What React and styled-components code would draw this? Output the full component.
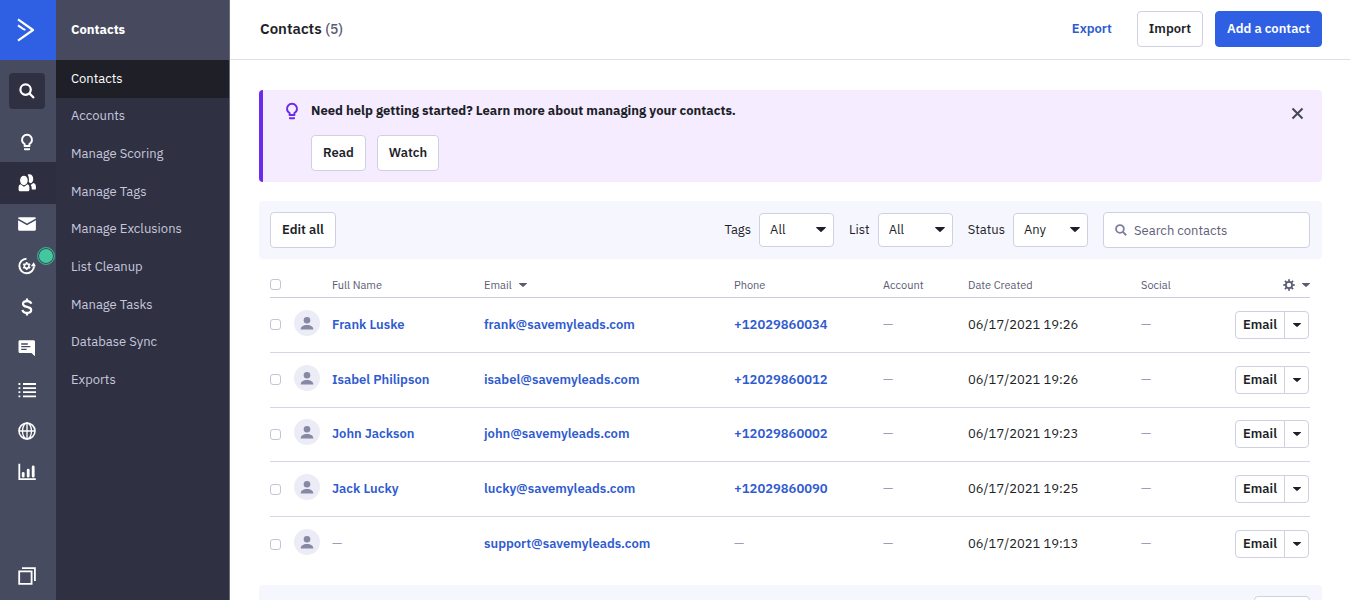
import React, { useState } from 'react';
import styled, { createGlobalStyle } from 'styled-components';

const GlobalStyle = createGlobalStyle`
  * {
    box-sizing: border-box;
  }
  body {
    margin: 0;
    background: #fff;
    color: #1e1f29;
    font-family: 'IBM Plex Sans', Roboto, sans-serif;
    font-size: 13px;
    line-height: 18px;
  }
  button, input, select {
    margin: 0;
    font: inherit;
    color: inherit;
  }
  a {
    text-decoration: none;
  }
`;

const Page = styled.div`
  display: flex;
  height: 100vh;
  overflow: hidden;
`;

const Rail = styled.nav`
  display: flex;
  flex-direction: column;
  flex: none;
  width: 56px;
  background: #464b5f;
`;

const Logo = styled.a`
  display: flex;
  align-items: center;
  justify-content: center;
  flex: none;
  height: 60px;
  padding-right: 4px;
  background: #2f5fe3;
`;

const RailSearch = styled.button`
  display: flex;
  align-items: center;
  justify-content: center;
  flex: none;
  width: 36px;
  height: 36px;
  margin: 13px 9px 12px;
  padding: 0;
  border: 0;
  border-radius: 4px;
  background: #2f3042;
`;

const RailList = styled.div`
  display: grid;
  grid-auto-rows: 1fr;
  height: 372px;
`;

const RailItem = styled.a`
  position: relative;
  display: flex;
  align-items: center;
  justify-content: center;
  padding-right: 2px;
  background: ${props => (props.$active ? '#2d2e40' : 'transparent')};
`;

const RailBottom = styled.div`
  margin-top: auto;
  padding: 0 2px 15px 0;
  display: flex;
  justify-content: center;
`;

const Dot = styled.span`
  position: absolute;
  right: 1px;
  top: 2px;
  width: 18px;
  height: 18px;
  border: 1px solid #3fa98c;
  border-radius: 50%;
  background: #44c69e;
  box-shadow: inset 0 0 0 1px #2c4a55;
`;

const SubMenu = styled.nav`
  flex: none;
  width: 174px;
  border-right: 1px solid #6b6c7c;
  background: #2f3042;
`;

const SubTitle = styled.h2`
  display: flex;
  align-items: center;
  height: 60px;
  margin: 0;
  padding-left: 15px;
  background: #474a5e;
  color: #fff;
  font-size: 13px;
  font-weight: 700;
`;

const SubList = styled.div`
  display: grid;
  grid-auto-rows: 1fr;
  height: 339px;
`;

const SubItem = styled.a`
  display: flex;
  align-items: center;
  padding-left: 15px;
  background: ${props => (props.$active ? '#1e1f27' : 'transparent')};
  color: ${props => (props.$active ? '#fff' : '#c6c8dc')};
`;

const Main = styled.main`
  flex: 1;
  min-width: 0;
`;

const Header = styled.header`
  display: flex;
  align-items: center;
  height: 60px;
  padding: 0 28px 2px 30px;
  border-bottom: 1px solid #dddeea;
`;

const Title = styled.h1`
  flex: 1;
  margin: 0;
  font-size: 15px;
  font-weight: 600;
  span {
    color: #5a5b74;
    font-size: 14px;
    font-weight: 500;
  }
`;

const ExportLink = styled.a`
  margin-right: 25px;
  color: #2f5bd0;
  font-weight: 600;
`;

const Button = styled.button`
  height: 36px;
  padding: 0 11px;
  border: 1px solid ${props => (props.$primary ? '#2f5fe3' : '#cfd0e2')};
  border-radius: 4px;
  background: ${props => (props.$primary ? '#2f5fe3' : '#fff')};
  color: ${props => (props.$primary ? '#fff' : '#1e1f29')};
  font-weight: 600;
  white-space: nowrap;
`;

const HeaderButtons = styled.div`
  display: flex;
  gap: 12px;
`;

const Content = styled.div`
  padding: 30px 28px 0 29px;
`;

const Banner = styled.section`
  display: flex;
  align-items: flex-start;
  height: 92px;
  padding: 12px 18px 0 20px;
  border-left: 4px solid #6a2cec;
  border-radius: 4px;
  background: #f5edff;
`;

const BannerBody = styled.div`
  flex: 1;
  margin-left: 10px;
  p {
    margin: 0 0 15px;
    font-weight: 700;
  }
  div {
    display: flex;
    gap: 11px;
  }
`;

const CloseButton = styled.button`
  display: flex;
  margin-top: 5px;
  padding: 0;
  border: 0;
  background: none;
`;

const Toolbar = styled.section`
  display: flex;
  align-items: center;
  height: 58px;
  margin-top: 19px;
  padding: 0 12px 0 11px;
  border-radius: 4px;
  background: #f6f6fe;
`;

const Filters = styled.div`
  display: flex;
  align-items: center;
  gap: 15px;
  margin-left: auto;
`;

const Filter = styled.label`
  display: flex;
  align-items: center;
  gap: 8px;
`;

const SelectBox = styled.span`
  position: relative;
  display: block;
  select {
    display: block;
    width: 75px;
    height: 34px;
    padding: 0 10px;
    border: 1px solid #cfd0e2;
    border-radius: 4px;
    background: #fff;
    appearance: none;
  }
  svg {
    position: absolute;
    right: 8px;
    top: 14px;
    pointer-events: none;
  }
`;

const SearchBox = styled.div`
  position: relative;
  input {
    display: block;
    width: 207px;
    height: 36px;
    padding: 0 10px 0 30px;
    border: 1px solid #cfd0e2;
    border-radius: 4px;
    background: #fff;
  }
  input::placeholder {
    color: #5f6079;
    opacity: 1;
  }
  svg {
    position: absolute;
    left: 12px;
    top: 12px;
  }
`;

const TableWrap = styled.div`
  padding: 13px 12px 0 11px;
`;

const Table = styled.table`
  width: 100%;
  height: 300px;
  table-layout: fixed;
  border-collapse: separate;
  border-spacing: 0;
  th {
    height: 26px;
    padding: 0;
    border-bottom: 1px solid #cbccde;
    color: #5a5b74;
    font-size: 11px;
    font-weight: 400;
    text-align: left;
  }
  td {
    padding: 0;
    border-bottom: 1px solid #d6d7e6;
    vertical-align: middle;
    white-space: nowrap;
  }
  tr:last-child td {
    border-bottom-color: transparent;
  }
`;

const Check = styled.input`
  display: block;
  width: 11px;
  height: 11px;
  border: 1px solid #c3c4d8;
  border-radius: 3px;
  background: #fff;
  appearance: none;
  &:checked {
    background: #2f5fe3;
  }
`;

const SortButton = styled.button`
  display: flex;
  align-items: center;
  gap: 7px;
  padding: 0;
  border: 0;
  background: none;
`;

const ColumnsButton = styled(SortButton)`
  margin-left: auto;
`;

const Avatar = styled.svg`
  display: block;
  margin-bottom: 4px;
`;

const CellLink = styled.a`
  color: #2f5bd0;
  font-weight: 600;
`;

const Dash = styled.span`
  color: #9c9db6;
`;

const SplitButton = styled.div`
  display: flex;
  width: 74px;
  height: 28px;
  border: 1px solid #cfd0e2;
  border-radius: 4px;
  button {
    display: flex;
    align-items: center;
    justify-content: center;
    flex: 1;
    padding: 0;
    border: 0;
    background: none;
    font-weight: 600;
  }
  button + button {
    flex: none;
    width: 24px;
    border-left: 1px solid #cfd0e2;
  }
`;

const Footer = styled.footer`
  display: flex;
  justify-content: flex-end;
  margin-top: 13px;
  padding: 11px 12px;
  border-radius: 4px;
  background: #f6f6fe;
  select {
    width: 56px;
    height: 34px;
    border: 1px solid #cfd0e2;
    border-radius: 4px;
    background: #fff;
    appearance: none;
  }
`;

const Caret = ({ width = 10, color = '#1e1f29' }) => (
  <svg width={width} height={width / 2} viewBox="0 0 10 5">
    <path d="M.6 0h8.8c.5 0 .7.5.4.8L5.5 4.8a.7.7 0 0 1-1 0L.2.8C-.1.5.1 0 .6 0z" fill={color} />
  </svg>
);

const Magnifier = ({ size, color, weight }) => (
  <svg width={size} height={size} viewBox="0 0 16 16" fill="none" stroke={color} strokeWidth={weight}>
    <circle cx="6.6" cy="6.6" r="5.2" />
    <path d="M10.4 10.4l4.6 4.6" />
  </svg>
);

const Bulb = ({ color }) => (
  <svg width="18" height="18" viewBox="0 0 18 18">
    <path d="M6.6 13v-1.8a5 5 0 1 1 4.8 0V13z" fill="none" stroke={color} strokeWidth="2" strokeLinejoin="round" />
    <path d="M6 15.2h6v1.2c0 .5-.4.8-.8.8H6.8c-.4 0-.8-.3-.8-.8z" fill={color} />
  </svg>
);

// 톱니바퀴 아이콘
const Gear = ({ size, color }) => (
  <svg width={size} height={size} viewBox="0 0 14 14" fill="none" stroke={color}>
    <circle cx="7" cy="7" r="3.6" strokeWidth="2" />
    {[0, 45, 90, 135, 180, 225, 270, 315].map(deg => (
      <path key={deg} d="M7 3V.3" strokeWidth="2" transform={`rotate(${deg} 7 7)`} />
    ))}
  </svg>
);

const railIcons = [
  { name: 'Guide', icon: <Bulb color="#fff" /> },
  {
    name: 'Contacts',
    active: true,
    icon: (
      <svg width="18" height="18" viewBox="0 0 18 18" fill="#fff">
        <path d="M5.9 1.8c2.2 0 3.8 2 3.8 4.7 0 2.4-1.500 4.700-3.800 4.700S2.100 8.900 2.100 6.500c0-2.700 1.600-4.700 3.800-4.700z" />
        <path d="M.6 13.300c0-1.500.6-2.500 1.800-3l3.600 2.400 3.600-2.400c1.200.5 1.800 1.500 1.800 3v2.500c0 .9-.6 1.500-1.500 1.500H2.100c-.9 0-1.500-.6-1.500-1.500z" />
        <path d="M9.700.6c3-1.100 5.500.8 5.500 4.300 0 2.300-.9 3.900-2.400 4.400-1-.2-1.600-.7-2.100-1.500.5-2.400.2-4.900-1-7.200z" />
        <path d="M12.700 11l2.600-2c1.800.6 2.600 1.700 2.600 3.400v2.300c0 .6-.3.9-.9.9h-3.300c0-1.900 0-3.400-1-4.600z" />
      </svg>
    ),
  },
  {
    name: 'Campaigns',
    icon: (
      <svg width="18" height="14" viewBox="0 0 18 14" fill="#fff">
        <path d="M1.500.3h15c.8 0 1.400.5 1.400 1.200L9 6.500.1 1.500C.1.800.7.3 1.500.3z" />
        <path d="M.1 3.300L9 8.200l8.900-4.900v8.900c0 .9-.6 1.500-1.500 1.500H1.600c-.9 0-1.500-.6-1.500-1.500z" />
      </svg>
    ),
  },
  {
    name: 'Automations',
    dot: true,
    icon: (
      <svg width="18" height="18" viewBox="0 0 18 18" fill="none" stroke="#fff">
        <path d="M8.500 1.700a7.300 7.300 0 1 0 7.500 7.600" strokeWidth="2" />
        <path d="M12.800 9.300L15.700 5.200l2.200 4.100z" fill="#fff" stroke="none" />
        <circle cx="8.700" cy="9" r="2.300" strokeWidth="1.600" />
        {[0, 60, 120, 180, 240, 300].map(deg => (
          <path key={deg} d="M8.700 6.300V5" strokeWidth="1.800" transform={`rotate(${deg} 8.7 9)`} />
        ))}
      </svg>
    ),
  },
  {
    name: 'Deals',
    icon: (
      <svg width="18" height="18" viewBox="0 0 18 18" fill="none" stroke="#fff" strokeWidth="2.200">
        <path d="M13.200 5.800C12.900 4 11.300 3.100 9 3.100c-2.400 0-4 1-4 2.800 0 4.200 8.200 1.800 8.200 6.100 0 1.900-1.700 2.900-4.200 2.900s-4.200-1-4.500-3" />
        <path d="M9 .5v2.600M9 14.900v2.600" />
      </svg>
    ),
  },
  {
    name: 'Conversations',
    icon: (
      <svg width="18" height="18" viewBox="0 0 18 18">
        <path d="M2 1.200h13.500c.9 0 1.500.6 1.500 1.500v14.500L13.400 14H2c-.9 0-1.500-.6-1.500-1.500V2.700c0-.9.600-1.500 1.500-1.500z" fill="#fff" />
        <path d="M3.200 5h6.600M3.200 7.700h9.100M3.200 10.400h5.400" stroke="#464b5f" strokeWidth="1.300" />
      </svg>
    ),
  },
  {
    name: 'Lists',
    icon: (
      <svg width="18" height="18" viewBox="0 0 18 18" stroke="#fff" strokeWidth="1.800">
        <path d="M5 3h13M5 7.100h13M5 11.200h13M5 15.300h13" />
        <path d="M.5 3h1.800M.5 7.100h1.800M.5 11.200h1.800M.5 15.300h1.800" />
      </svg>
    ),
  },
  {
    name: 'Website',
    icon: (
      <svg width="18" height="18" viewBox="0 0 18 18" fill="none" stroke="#fff" strokeWidth="1.300">
        <circle cx="9" cy="9" r="8" strokeWidth="1.600" />
        <ellipse cx="9" cy="9" rx="4.500" ry="8" />
        <path d="M9 1v16M1 9h16" />
      </svg>
    ),
  },
  {
    name: 'Reports',
    icon: (
      <svg width="18" height="18" viewBox="0 0 18 18" fill="none" stroke="#fff" strokeWidth="1.800">
        <path d="M1.300.8v15.400h16.500" />
        <path d="M5.200 13.200V10.300M10.200 13.200V7.100M15.200 13.200V3.900" strokeWidth="2.800" strokeLinecap="round" />
      </svg>
    ),
  },
];

const menu = [
  'Contacts',
  'Accounts',
  'Manage Scoring',
  'Manage Tags',
  'Manage Exclusions',
  'List Cleanup',
  'Manage Tasks',
  'Database Sync',
  'Exports',
];

const contacts = [
  { name: 'Frank Luske', email: 'frank@savemyleads.com', phone: '+12029860034', date: '06/17/2021 19:26' },
  { name: 'Isabel Philipson', email: 'isabel@savemyleads.com', phone: '+12029860012', date: '06/17/2021 19:26' },
  { name: 'John Jackson', email: 'john@savemyleads.com', phone: '+12029860002', date: '06/17/2021 19:23' },
  { name: 'Jack Lucky', email: 'lucky@savemyleads.com', phone: '+12029860090', date: '06/17/2021 19:25' },
  { name: '', email: 'support@savemyleads.com', phone: '', date: '06/17/2021 19:13' },
];

const columns = [24, 38, 152, 250, 149, 85, 173, 94, 75];

const filters = [
  { label: 'Tags', value: 'All' },
  { label: 'List', value: 'All' },
  { label: 'Status', value: 'Any' },
];

const Value = ({ children }) =>
  children ? <CellLink href="#">{children}</CellLink> : <Dash>—</Dash>;

export default function App() {
  const [selected, setSelected] = useState([]);

  const toggle = email => {
    setSelected(prev => (prev.includes(email) ? prev.filter(e => e !== email) : [...prev, email]));
  };

  const toggleAll = () => {
    setSelected(selected.length === contacts.length ? [] : contacts.map(c => c.email));
  };

  return (
    <Page>
      <GlobalStyle />
      <Rail>
        <Logo href="#" aria-label="Home">
          <svg width="18" height="24" viewBox="0 0 18 24" fill="none" stroke="#fff" strokeWidth="2.200">
            <path d="M1 1.400L16 12 1 22.600" strokeLinejoin="round" />
            <path d="M1 7.400l5.600 3.900c.6.400 1 .3 1.700-.2" strokeWidth="2" />
          </svg>
        </Logo>
        <RailSearch type="button" aria-label="Search">
          <Magnifier size={16} color="#fff" weight={2.2} />
        </RailSearch>
        <RailList>
          {railIcons.map(item => (
            <RailItem key={item.name} href="#" aria-label={item.name} $active={item.active}>
              {item.icon}
              {item.dot && <Dot />}
            </RailItem>
          ))}
        </RailList>
        <RailBottom>
          <svg width="18" height="18" viewBox="0 0 18 18" fill="none" stroke="#fff" strokeWidth="1.800">
            <path d="M1.200 4.400h12.400v12.400H1.200z" />
            <path d="M4 1.200h12.900V14" />
          </svg>
        </RailBottom>
      </Rail>

      <SubMenu>
        <SubTitle>Contacts</SubTitle>
        <SubList>
          {menu.map((item, index) => (
            <SubItem key={item} href="#" $active={index === 0}>
              {item}
            </SubItem>
          ))}
        </SubList>
      </SubMenu>

      <Main>
        <Header>
          <Title>
            Contacts <span>({contacts.length})</span>
          </Title>
          <ExportLink href="#">Export</ExportLink>
          <HeaderButtons>
            <Button type="button">Import</Button>
            <Button type="button" $primary>
              Add a contact
            </Button>
          </HeaderButtons>
        </Header>

        <Content>
          <Banner>
            <Bulb color="#6a2cec" />
            <BannerBody>
              <p>Need help getting started? Learn more about managing your contacts.</p>
              <div>
                <Button type="button">Read</Button>
                <Button type="button">Watch</Button>
              </div>
            </BannerBody>
            <CloseButton type="button" aria-label="Close">
              <svg width="13" height="13" viewBox="0 0 13 13" stroke="#45465c" strokeWidth="2">
                <path d="M1.500 1.500l10 10M11.500 1.500l-10 10" />
              </svg>
            </CloseButton>
          </Banner>

          <Toolbar>
            <Button type="button">Edit all</Button>
            <Filters>
              {filters.map(filter => (
                <Filter key={filter.label}>
                  {filter.label}
                  <SelectBox>
                    <select>
                      <option>{filter.value}</option>
                    </select>
                    <Caret />
                  </SelectBox>
                </Filter>
              ))}
              <SearchBox>
                <input type="text" placeholder="Search contacts" aria-label="Search contacts" />
                <Magnifier size={12} color="#7c7e9a" weight={2.4} />
              </SearchBox>
            </Filters>
          </Toolbar>

          <TableWrap>
            <Table>
              <colgroup>
                {columns.map((width, index) => (
                  <col key={index} width={width} />
                ))}
              </colgroup>
              <thead>
                <tr>
                  <th>
                    <Check
                      type="checkbox"
                      aria-label="Select all"
                      checked={selected.length === contacts.length}
                      onChange={toggleAll}
                    />
                  </th>
                  <th />
                  <th>Full Name</th>
                  <th>
                    <SortButton type="button">
                      Email <Caret width={8} color="#5a5b74" />
                    </SortButton>
                  </th>
                  <th>Phone</th>
                  <th>Account</th>
                  <th>Date Created</th>
                  <th>Social</th>
                  <th>
                    <ColumnsButton type="button" aria-label="Columns">
                      <Gear size={12} color="#5a5b74" />
                      <Caret width={8} color="#5a5b74" />
                    </ColumnsButton>
                  </th>
                </tr>
              </thead>
              <tbody>
                {contacts.map(contact => (
                  <tr key={contact.email}>
                    <td>
                      <Check
                        type="checkbox"
                        aria-label={contact.email}
                        checked={selected.includes(contact.email)}
                        onChange={() => toggle(contact.email)}
                      />
                    </td>
                    <td>
                      <Avatar width="26" height="26" viewBox="0 0 26 26">
                        <circle cx="13" cy="13" r="13" fill="#ebecf6" />
                        <g fill="#8788a3">
                          <circle cx="13" cy="10.200" r="3.300" />
                          <path d="M6.700 19.400c0-2.600 2.600-4.400 6.300-4.400s6.300 1.800 6.300 4.400z" />
                        </g>
                      </Avatar>
                    </td>
                    <td>
                      <Value>{contact.name}</Value>
                    </td>
                    <td>
                      <Value>{contact.email}</Value>
                    </td>
                    <td>
                      <Value>{contact.phone}</Value>
                    </td>
                    <td>
                      <Dash>—</Dash>
                    </td>
                    <td>{contact.date}</td>
                    <td>
                      <Dash>—</Dash>
                    </td>
                    <td>
                      <SplitButton>
                        <button type="button">Email</button>
                        <button type="button" aria-label="More actions">
                          <Caret width={8} />
                        </button>
                      </SplitButton>
                    </td>
                  </tr>
                ))}
              </tbody>
            </Table>
          </TableWrap>

          <Footer>
            <select aria-label="Rows per page" />
          </Footer>
        </Content>
      </Main>
    </Page>
  );
}
